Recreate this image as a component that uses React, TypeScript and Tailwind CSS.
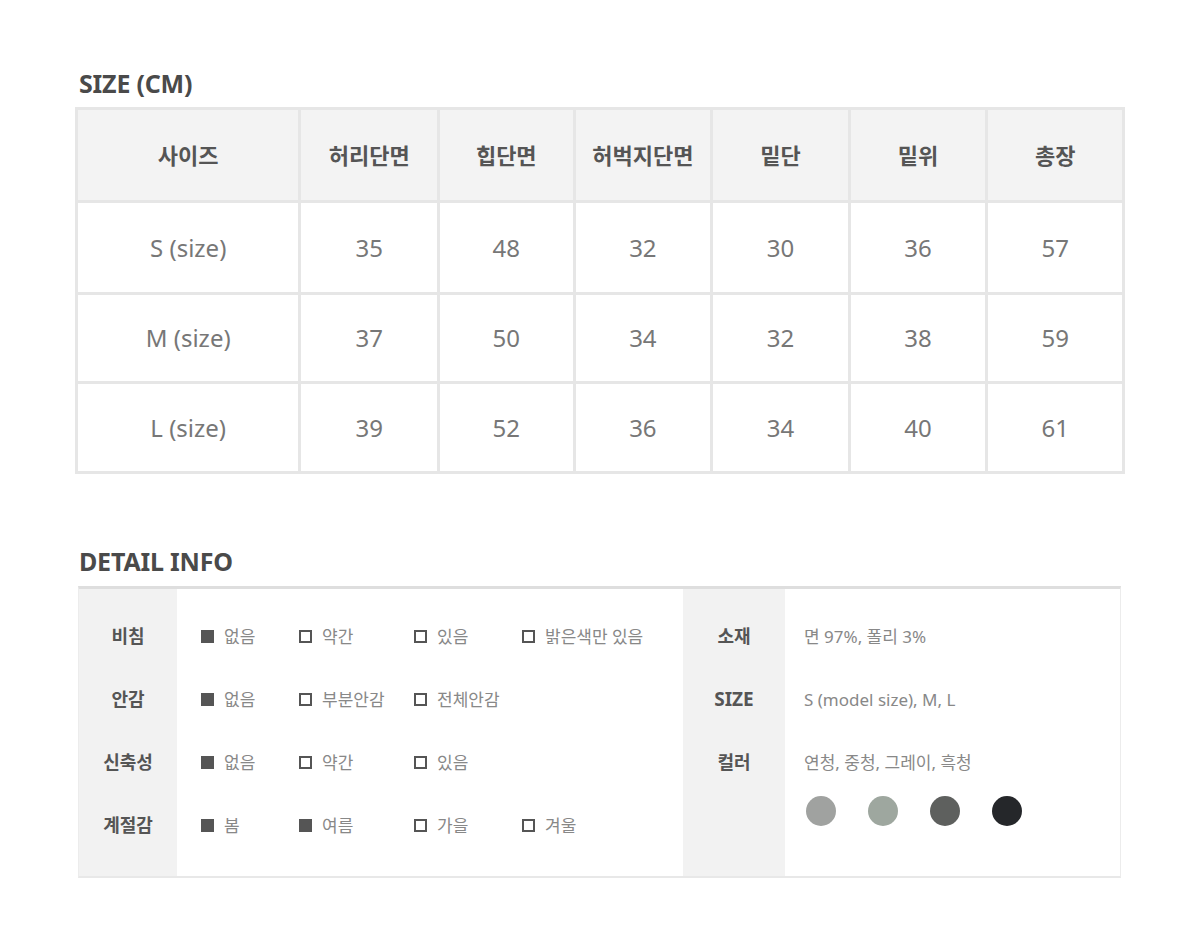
import React from "react";

const font = { fontFamily: '"Noto Sans", "Noto Sans CJK KR", sans-serif' };

const headers = ["사이즈", "허리단면", "힙단면", "허벅지단면", "밑단", "밑위", "총장"];
const rows = [
  ["S (size)", "35", "48", "32", "30", "36", "57"],
  ["M (size)", "37", "50", "34", "32", "38", "59"],
  ["L (size)", "39", "52", "36", "34", "40", "61"],
];
const widths = ["w-[224px]", "w-[139px]", "w-[136px]", "w-[138px]", "w-[138px]", "w-[138px]", "w-[137px]"];
const rowH = ["h-[92px]", "h-[89px]", "h-[90px]"];

type Opt = [boolean, string];
const detailRows: { label: string; opts: Opt[] }[] = [
  { label: "비침", opts: [[true, "없음"], [false, "약간"], [false, "있음"], [false, "밝은색만 있음"]] },
  { label: "안감", opts: [[true, "없음"], [false, "부분안감"], [false, "전체안감"]] },
  { label: "신축성", opts: [[true, "없음"], [false, "약간"], [false, "있음"]] },
  { label: "계절감", opts: [[true, "봄"], [true, "여름"], [false, "가을"], [false, "겨울"]] },
];
const optW = ["w-[98px]", "w-[115px]", "w-[108px]", "w-[150px]"];

function Box({ on }: { on: boolean }) {
  return on ? (
    <span className="inline-block w-[13px] h-[13px] bg-[#555555] shrink-0" />
  ) : (
    <span className="inline-block w-[13px] h-[13px] border-2 border-[#555555] bg-white shrink-0" />
  );
}

export default function App() {
  return (
    <div className="w-[1200px] h-[939px] bg-white relative" style={font}>
      <div className="pt-[66px] pl-[75px]">
        <h2 className="pl-[4px] text-[25px] leading-[34px] font-bold text-[#4a4a4a] tracking-[-0.2px]">SIZE (CM)</h2>
        <table className="mt-[7px] border-collapse w-[1050px]">
          <thead>
            <tr className="h-[93px] bg-[#f3f3f3]">
              {headers.map((h, i) => (
                <th
                  key={h}
                  className={`${widths[i]} border-[3px] border-[#e6e6e6] text-[22px] font-bold text-[#555555] text-center`}
                >
                  {h}
                </th>
              ))}
            </tr>
          </thead>
          <tbody>
            {rows.map((r, ri) => (
              <tr key={ri} className={rowH[ri]}>
                {r.map((c, ci) => (
                  <td
                    key={ci}
                    className="border-[3px] border-[#e6e6e6] text-[24px] text-[#777777] text-center font-normal"
                  >
                    {c}
                  </td>
                ))}
              </tr>
            ))}
          </tbody>
        </table>
      </div>

      <div className="pl-[78px] pt-[70px]">
        <h2 className="pl-[1px] text-[25px] leading-[34px] font-bold text-[#4a4a4a] tracking-[-0.2px]">DETAIL INFO</h2>
        <div className="mt-[8px] w-[1043px] h-[292px] border-t-[3px] border-t-[#dedede] border-b-2 border-b-[#e8e8e8] border-x border-x-[#ececec] flex">
          <div className="w-[98px] bg-[#f2f2f2] pt-[16px]">
            {detailRows.map((d) => (
              <div key={d.label} className="h-[63px] flex items-center justify-center text-[18px] font-bold text-[#555555]">
                {d.label}
              </div>
            ))}
          </div>
          <div className="w-[506px] bg-white pt-[16px] pl-[24px]">
            {detailRows.map((d) => (
              <div key={d.label} className="h-[63px] flex items-center">
                {d.opts.map(([on, t], i) => (
                  <div key={t} className={`${optW[i]} flex items-center gap-[10px] shrink-0`}>
                    <Box on={on} />
                    <span className="text-[17px] text-[#888888] whitespace-nowrap">{t}</span>
                  </div>
                ))}
              </div>
            ))}
          </div>
          <div className="w-[102px] bg-[#f2f2f2] pt-[16px]">
            {["소재", "SIZE", "컬러"].map((l) => (
              <div key={l} className={`h-[63px] flex items-center justify-center font-bold text-[#555555] ${l === "SIZE" ? "text-[19px]" : "text-[18px]"}`}>
                {l}
              </div>
            ))}
          </div>
          <div className="flex-1 bg-white pt-[16px] pl-[19px]">
            {["면 97%, 폴리 3%", "S (model size), M, L", "연청, 중청, 그레이, 흑청"].map((v) => (
              <div key={v} className="h-[63px] flex items-center text-[17px] text-[#888888]">
                {v}
              </div>
            ))}
            <div className="flex gap-[32px] pl-[2px] mt-[2px]">
              {["bg-[#a0a2a0]", "bg-[#9ea79f]", "bg-[#5e605e]", "bg-[#25272a]"].map((c) => (
                <span key={c} className={`w-[30px] h-[30px] rounded-full ${c}`} />
              ))}
            </div>
          </div>
        </div>
      </div>
    </div>
  );
}
